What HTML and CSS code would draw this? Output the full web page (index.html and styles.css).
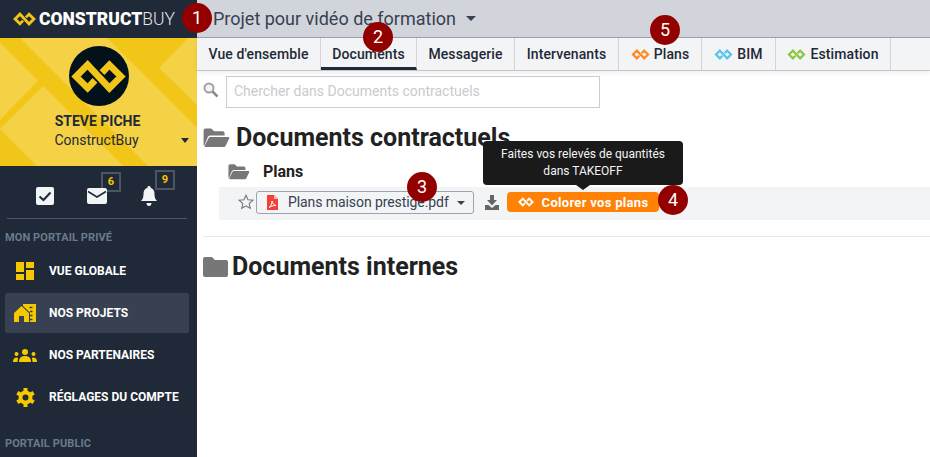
FILE: index.html
```html
<!DOCTYPE html>
<html lang="fr">
<head>
<meta charset="utf-8">
<title>ConstructBuy</title>
<link rel="stylesheet" href="styles.css">
</head>
<body>
<svg class="defs" width="0" height="0" aria-hidden="true">
  <symbol id="cb" viewBox="0 0 156 94">
    <path d="M88 36 109 14 142 47 109 80 47 14 14 47 47 80 68 58" fill="none" stroke="currentColor" stroke-width="19"/>
  </symbol>
  <symbol id="folder-open" viewBox="0 0 28 22">
    <path d="M1 19V3.500A2 2 0 0 1 3 1.500h6l3 3h9a2 2 0 0 1 2 2V9H8a3 3 0 0 0-2.800 2L1.500 20z" fill="currentColor"/>
    <path d="M8 10.500h19a1 1 0 0 1 .9 1.400L24 20a2 2 0 0 1-1.800 1H3a1 1 0 0 1-.9-1.400L6 12a2.500 2.500 0 0 1 2-1.500z" fill="currentColor"/>
  </symbol>
</svg>
<div class="app">
  <aside class="sidebar">
    <div class="brand">
      <svg class="brand-logo"><use href="#cb"/></svg>
      <span class="brand-text"><b>CONSTRUCT</b>BUY</span>
    </div>
    <div class="profile">
      <svg class="profile-bg" viewBox="0 0 197 128" preserveAspectRatio="none" aria-hidden="true">
        <path d="M0 0H197V128H0z" fill="#f1c618"/>
        <path d="M0 5 38 43 0 82zM20 0H107L197 90V128H148zM188 0H197V67L159 30zM0 91 43 48 123 128H37z" fill="#f4d145"/>
      </svg>
      <div class="avatar"><svg class="avatar-logo"><use href="#cb"/></svg></div>
      <div class="profile-name">STEVE PICHE</div>
      <div class="profile-org">ConstructBuy<span class="caret caret-dark"></span></div>
    </div>
    <div class="quick">
      <div class="quick-item">
        <svg width="18" height="18" viewBox="0 0 18 18"><rect width="18" height="18" rx="2" fill="#f3f4f6"/><path d="M3.500 9.500 7.500 13 14.500 5.500" fill="none" stroke="#1f2937" stroke-width="2"/></svg>
      </div>
      <div class="quick-item">
        <svg width="20" height="16" viewBox="0 0 20 16"><rect width="20" height="16" rx="2" fill="#f3f4f6"/><path d="M1 3.500 10 9 19 3.500" fill="none" stroke="#1f2937" stroke-width="1.500"/></svg>
        <span class="count">6</span>
      </div>
      <div class="quick-item">
        <svg width="16" height="20" viewBox="0 0 16 20"><path d="M8 0a1.500 1.500 0 0 1 1.500 1.800C12.500 2.700 13.500 5 13.500 8c0 3 .6 5 2.500 7H0c1.900-2 2.500-4 2.500-7 0-3 1-5.300 4-6.200A1.500 1.500 0 0 1 8 0zM5.500 17h5c0 2-1 3-2.500 3s-2.500-1-2.500-3z" fill="#f3f4f6"/></svg>
        <span class="count">9</span>
      </div>
    </div>
    <div class="side-rule"></div>
    <div class="side-label">MON PORTAIL PRIVÉ</div>
    <nav class="side-nav">
      <a class="side-link">
        <span class="side-icon"><svg width="18" height="18" viewBox="0 0 18 18"><path d="M0 0h8v10H0zM10 0h8v6h-8zM0 12h8v6H0zM10 8h8v10h-8z" fill="#f5c800"/></svg></span>VUE GLOBALE
      </a>
      <a class="side-link side-link-active">
        <span class="side-icon"><svg width="22" height="18" viewBox="0 0 22 18"><path d="M0 9 7.500 2 15 9v9h-5v-6H5v6H0z" fill="#f5c800"/><path d="M9 0H22V18H16V8.500L9 2z" fill="#f5c800"/><path d="M15.500 3.500h3M16 7.500h2.500M16 11.500h2.500M16 15.500h2.500" stroke="#374151" stroke-width="1.300"/></svg></span>NOS PROJETS
      </a>
      <a class="side-link">
        <span class="side-icon"><svg width="24" height="13" viewBox="0 0 24 13"><circle cx="12" cy="3" r="3" fill="#f5c800"/><path d="M6 13c0-4 2-6 6-6s6 2 6 6z" fill="#f5c800"/><circle cx="3.500" cy="5" r="2" fill="#f5c800"/><circle cx="20.500" cy="5" r="2" fill="#f5c800"/><path d="M0 13c0-3 1-4.500 4-4.500l1 .5-.5 4zM24 13c0-3-1-4.500-4-4.500l-1 .5.500 4z" fill="#f5c800"/></svg></span>NOS PARTENAIRES
      </a>
      <a class="side-link">
        <span class="side-icon"><svg width="19" height="19" viewBox="0 0 19 19"><circle cx="9.500" cy="9.500" r="5" fill="none" stroke="#f5c800" stroke-width="4"/><path d="M9.500 0v4M9.500 15v4M1.300 4.700l3.400 2M14.300 12.300l3.400 2M1.300 14.300l3.400-2M14.300 6.700l3.400-2" stroke="#f5c800" stroke-width="4"/></svg></span>RÉGLAGES DU COMPTE
      </a>
    </nav>
    <div class="side-label side-label-public">PORTAIL PUBLIC</div>
  </aside>

  <main class="main">
    <header class="topbar">
      <span class="project-title">Projet pour vidéo de formation</span><span class="caret caret-title"></span>
    </header>
    <nav class="tabs">
      <a class="tab tab-1">Vue d'ensemble</a>
      <a class="tab tab-2 tab-active">Documents</a>
      <a class="tab tab-3">Messagerie</a>
      <a class="tab tab-4">Intervenants</a>
      <a class="tab tab-5"><svg class="tab-logo orange"><use href="#cb"/></svg>Plans</a>
      <a class="tab tab-6"><svg class="tab-logo blue"><use href="#cb"/></svg>BIM</a>
      <a class="tab tab-7"><svg class="tab-logo green"><use href="#cb"/></svg>Estimation</a>
    </nav>
    <div class="search-row">
      <svg class="search-icon" width="16" height="16" viewBox="0 0 16 16"><circle cx="6" cy="6" r="4.500" fill="#f3f4f6" stroke="#a3a3a3" stroke-width="2"/><path d="m9.500 9.500 5 5" stroke="#8a8a8a" stroke-width="2.500"/></svg>
      <div class="search-box">Chercher dans Documents contractuels</div>
    </div>
    <section class="docs">
      <h2 class="section-title section-contract"><svg class="folder-big"><use href="#folder-open"/></svg>Documents contractuels</h2>
      <h3 class="sub-title"><svg class="folder-small"><use href="#folder-open"/></svg>Plans</h3>
      <div class="file-row">
        <svg class="star" width="16" height="16" viewBox="0 0 16 16"><path d="m8 1.300 2 4.500 4.900.5-3.700 3.200 1.100 4.800L8 11.800l-4.300 2.500 1.100-4.800L1.100 6.300 6 5.800z" fill="none" stroke="#777" stroke-width="1.100"/></svg>
        <div class="file-select">
          <svg class="pdf" width="11" height="15" viewBox="0 0 11 15"><path d="M0 0h7l4 4v11H0z" fill="#ef4136"/><path d="M7 0l4 4H7z" fill="#f9b8b3"/><path d="M2 12.500c2-1 3-4 3-6.500 .500 2.500 2 4 4 4.500-2.500 0-5 .6-7 2z" fill="none" stroke="#fff" stroke-width="1"/></svg>
          <span class="file-name">Plans maison prestige.pdf</span>
          <span class="caret caret-file"></span>
        </div>
        <svg class="download" width="14" height="15" viewBox="0 0 14 15"><path d="M5 0h4v5h3L7 10.500 2 5h3zM0 10h3.500L7 13l3.500-3H14v5H0z" fill="#666"/></svg>
        <a class="color-btn"><svg class="btn-logo"><use href="#cb"/></svg>Colorer vos plans</a>
      </div>
      <hr class="section-rule">
      <h2 class="section-title section-internal">
        <svg class="folder-closed" width="25" height="21" viewBox="0 0 25 21"><path d="M0 3a2 2 0 0 1 2-2h7l3 3h11a2 2 0 0 1 2 2v13a2 2 0 0 1-2 2H2a2 2 0 0 1-2-2z" fill="#777"/></svg>Documents internes
      </h2>
    </section>
    <div class="tooltip">Faites vos relevés de quantités<br>dans TAKEOFF</div>
  </main>
</div>
<span class="step step-1">1</span>
<span class="step step-2">2</span>
<span class="step step-3">3</span>
<span class="step step-4">4</span>
<span class="step step-5">5</span>
</body>
</html>
```
FILE: styles.css
```css
* { box-sizing: border-box; }
html, body { margin: 0; height: 100%; overflow: hidden; }
body { font-family: Roboto, "Liberation Sans", sans-serif; background: #fff; color: #1f2937; }
.defs { position: absolute; }
.app { display: flex; height: 457px; }

.sidebar { width: 197px; flex: none; background: #1f2937; color: #fff; overflow: hidden; }
.brand { height: 38px; display: flex; align-items: center; padding-left: 13px; }
.brand-logo { width: 23px; height: 14px; color: #f2c618; margin-right: 3px; }
.brand-text { font-size: 17.5px; font-weight: 300; color: #e5e7eb; white-space: nowrap; }
.brand-text b { font-weight: 900; color: #fff; }

.profile { position: relative; height: 128px; padding-top: 8px; text-align: center; color: #1f2937; overflow: hidden; }
.profile-bg { position: absolute; left: 0; top: 0; width: 100%; height: 100%; }
.avatar { position: relative; width: 60px; height: 60px; margin: 0 auto; border-radius: 50%; background: #03111b; display: flex; align-items: center; justify-content: center; }
.avatar-logo { width: 55px; height: 33px; color: #f2c618; }
.profile-name { position: relative; margin-top: 7px; padding-right: 2px; font-size: 14px; line-height: 16px; font-weight: 700; }
.profile-org { position: relative; margin-top: 2px; font-size: 14px; line-height: 18px; padding-right: 4px; }
.caret { display: inline-block; width: 0; height: 0; border-style: solid; border-color: currentColor transparent transparent; }
.caret-dark { position: absolute; right: 8px; top: 7px; border-width: 5px 4px 0; }

.quick { display: flex; height: 52px; padding-left: 36px; align-items: center; padding-top: 8px; }
.quick-item { position: relative; display: flex; align-items: center; justify-content: center; }
.quick-item svg { position: relative; z-index: 1; }
.quick-item:nth-child(1) { width: 18px; }
.quick-item:nth-child(2) { width: 20px; margin-left: 33px; }
.quick-item:nth-child(3) { width: 16px; margin-left: 34px; }
.count { position: absolute; left: 14px; top: -16px; width: 20px; height: 20px; border: 2px solid #4b5563; color: #f5c800; font-size: 11px; font-weight: 700; line-height: 16px; text-align: center; }
.side-rule { height: 1px; margin: 0 10px 0 7px; background: #4b5563; }
.side-label { padding-left: 5px; margin-top: 12px; font-size: 11px; line-height: 13px; font-weight: 700; color: #6b7a8d; letter-spacing: .1px; }
.side-nav { margin-top: 7px; padding: 0 8px 0 5px; display: flex; flex-direction: column; gap: 2px; }
.side-link { height: 40px; display: flex; align-items: center; font-size: 12px; font-weight: 700; color: #fff; border-radius: 2px; white-space: nowrap; }
.side-link-active { background: #374151; }
.side-icon { width: 44px; flex: none; display: flex; justify-content: center; padding-right: 4px; }
.side-label-public { margin-top: 20px; }

.main { position: relative; flex: 1; min-width: 0; }
.topbar { height: 38px; background: #d1d5db; border-bottom: 1px solid #9ca3af; padding-left: 16px; display: flex; align-items: center; color: #374151; }
.project-title { font-size: 18px; }
.caret-title { margin-left: 10px; border-width: 5px 5px 0; color: #374151; }
.tabs { display: flex; height: 33px; background: #f3f4f6; border-bottom: 1px solid #c4c8ce; box-shadow: 0 2px 5px rgba(0,0,0,.07); }
.tab { display: flex; align-items: center; justify-content: center; height: 32px; font-size: 14px; font-weight: 500; color: #1f2937; border-right: 1px solid #d1d5db; white-space: nowrap; letter-spacing: .1px; }
.tab-1 { width: 124px; }
.tab-2 { width: 96px; }
.tab-3 { width: 98px; }
.tab-4 { width: 104px; }
.tab-5 { width: 83px; }
.tab-6 { width: 74px; }
.tab-7 { width: 115px; }
.tab-active { border-bottom: 3px solid #1f2937; padding-top: 3px; }
.tab-logo { width: 19px; height: 11px; margin-right: 4px; }
.orange { color: #ff8a1f; }
.blue { color: #5bc4ee; }
.green { color: #8cc63f; }

.search-row { display: flex; align-items: flex-start; padding: 5px 0 0 6px; }
.search-icon { margin-top: 6px; flex: none; }
.search-box { width: 374px; height: 32px; margin-left: 7px; border: 1px solid #ccc; padding-left: 7px; font-size: 14px; line-height: 29px; color: #c9cbce; }

.docs { padding-left: 6px; }
.section-title { margin: 0; display: flex; align-items: center; font-size: 25px; font-weight: 700; color: #222; }
.section-contract { margin-top: 14px; height: 30px; }
.folder-big { width: 28px; height: 21px; margin: 0 6px 0 -1px; color: #777; }
.sub-title { margin: 10px 0 0 24px; height: 18px; display: flex; align-items: center; font-size: 16px; font-weight: 700; color: #222; }
.folder-small { width: 23px; height: 17px; margin-right: 13px; color: #777; }
.file-row { display: flex; align-items: center; margin: 7px 0 0 16px; height: 33px; background: #f3f4f6; padding: 0 0 3px 19px; }
.star { flex: none; }
.file-select { display: flex; align-items: center; width: 218px; height: 23px; margin-left: 2px; border: 1px solid #9ca3af; border-radius: 3px; padding-left: 10px; position: relative; background: #f3f4f6; }
.pdf { flex: none; }
.file-name { margin-left: 10px; font-size: 14px; color: #374151; white-space: nowrap; letter-spacing: -.08px; }
.caret-file { position: absolute; right: 8px; top: 9px; border-width: 4px 4px 0; color: #374151; }
.download { margin-left: 11px; flex: none; }
.color-btn { display: flex; align-items: center; justify-content: center; width: 152px; height: 20px; margin-left: 8px; background: #ff8106; border-radius: 4px; color: #fff; font-size: 13px; font-weight: 700; letter-spacing: .3px; }
.btn-logo { width: 16px; height: 10px; margin-right: 8px; }
.section-rule { margin: 16px 0 0; border: 0; border-top: 1px solid #e5e7eb; }
.section-internal { margin-top: 14px; height: 30px; }
.folder-closed { margin-right: 4px; }

.tooltip { position: absolute; left: 286px; top: 141px; width: 200px; height: 44px; background: #1a1a1a; border-radius: 4px; color: #f3f4f6; font-size: 12px; line-height: 17px; padding-top: 5px; text-align: center; }
.tooltip::after { content: ""; position: absolute; left: 93px; bottom: -5px; border-style: solid; border-width: 5px 7px 0; border-color: #1a1a1a transparent transparent; }

.step { position: absolute; width: 30px; height: 30px; border-radius: 50%; background: #930000; color: #fff; font-size: 18px; line-height: 30px; text-align: center; }
.step-1 { left: 182px; top: 3px; }
.step-2 { left: 363px; top: 22px; }
.step-3 { left: 407px; top: 172px; }
.step-4 { left: 658px; top: 185px; }
.step-5 { left: 650px; top: 15px; }
```
